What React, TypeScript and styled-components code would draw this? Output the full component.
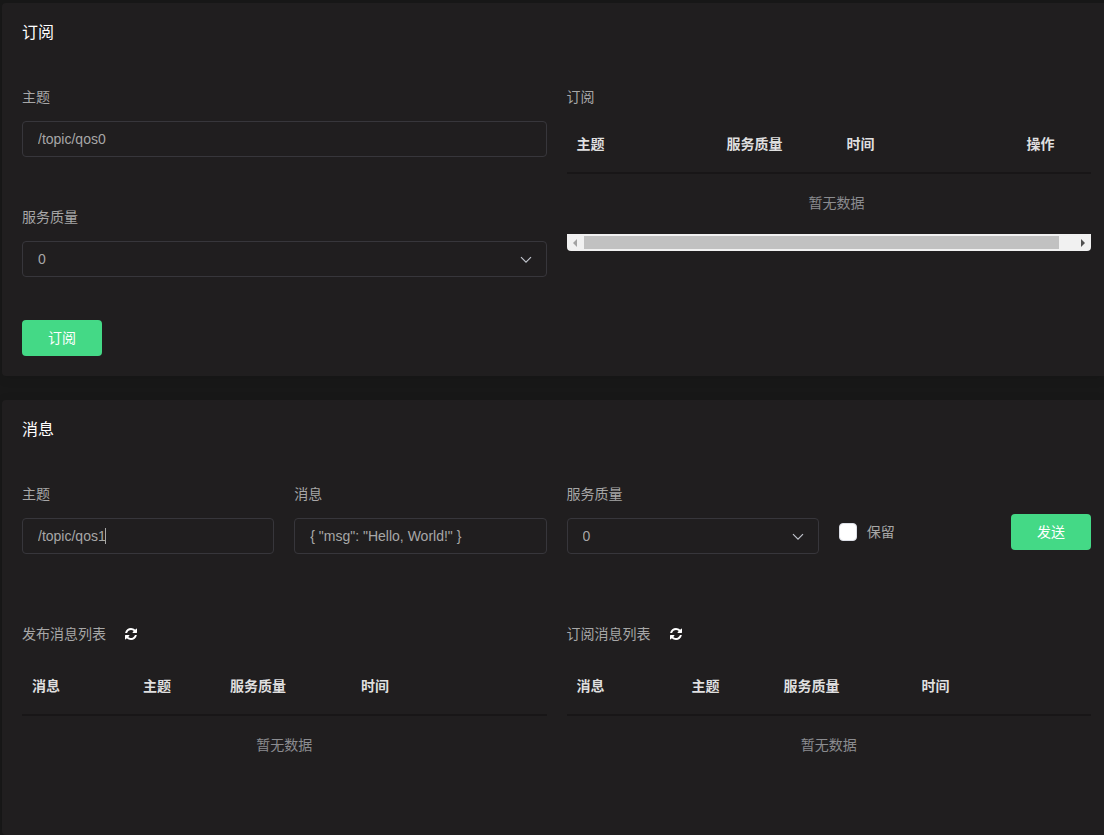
import React from "react";
import styled, { createGlobalStyle } from "styled-components";

const GlobalStyle = createGlobalStyle`
  *, *::before, *::after { box-sizing: border-box; }
  body {
    margin: 0;
    background: #181818;
    color: #a7a7a7;
    font: 14px/20px "Liberation Sans", "Noto Sans CJK SC", sans-serif;
  }
  button, input, select { font: inherit; }
`;

const Page = styled.main`
  display: flex;
  flex-direction: column;
  gap: 24px;
  min-height: 100vh;
  padding: 3px 0 0 2px;
`;

const Card = styled.section<{ $grow?: boolean }>`
  flex: ${(p) => (p.$grow ? "1 0 auto" : "none")};
  padding: 20px 13px 20px 20px;
  background: #201e1f;
  border-radius: 4px 0 0 4px;
  box-shadow: 0 2px 12px rgba(0, 0, 0, 0.1);
`;

const CardTitle = styled.h2`
  margin: 0 0 44px;
  color: #fff;
  font-size: 16px;
  line-height: 20px;
  font-weight: 400;
`;

const Halves = styled.div`
  display: grid;
  grid-template-columns: repeat(2, minmax(0, 1fr));
  column-gap: 20px;
`;

const Quarters = styled.form`
  display: grid;
  grid-template-columns: repeat(4, minmax(0, 1fr));
  column-gap: 20px;
  margin-bottom: 70px;
`;

const SubscribeForm = styled.form`
  display: flex;
  flex-direction: column;
  align-items: stretch;
  gap: 50px;
`;

const Field = styled.div`
  display: flex;
  flex-direction: column;
  gap: 14px;
`;

const Control = styled.div`
  position: relative;
`;

const TextInput = styled.input`
  display: block;
  width: 100%;
  height: 36px;
  padding: 0 15px;
  border: 1px solid #37363b;
  border-radius: 4px;
  outline: none;
  background: transparent;
  color: #a7a7a7;
`;

const Caret = styled.span`
  position: absolute;
  top: 10px;
  left: 83px;
  width: 1px;
  height: 16px;
  background: #a7a7a7;
  pointer-events: none;
`;

const Select = styled.select`
  display: block;
  width: 100%;
  height: 36px;
  padding: 0 32px 0 15px;
  appearance: none;
  border: 1px solid #37363b;
  border-radius: 4px;
  outline: none;
  background: #201e1f;
  color: #a7a7a7;
`;

const Chevron = styled.svg`
  position: absolute;
  top: 15px;
  right: 15px;
  pointer-events: none;
`;

const Button = styled.button`
  width: 80px;
  height: 36px;
  padding: 0;
  border: 0;
  border-radius: 4px;
  background: #44d986;
  color: #fff;
  cursor: pointer;
`;

const SubmitRow = styled.div`
  display: flex;
  margin-top: -7px;
`;

const SendRow = styled.div`
  display: flex;
  align-items: center;
  justify-content: space-between;
  height: 36px;
  margin-top: 30px;
`;

const CheckLabel = styled.label`
  display: flex;
  align-items: center;
  gap: 10px;
`;

const Checkbox = styled.input`
  width: 18px;
  height: 18px;
  margin: 0;
  appearance: none;
  border: 1px solid #dcdfe6;
  border-radius: 4px;
  background: #fff;
`;

const ListTitle = styled.div<{ $spaced?: boolean }>`
  display: flex;
  align-items: center;
  gap: 19px;
  margin-bottom: ${(p) => (p.$spaced ? "13px" : "8px")};
`;

const IconButton = styled.button`
  display: flex;
  padding: 0;
  border: 0;
  background: none;
  color: #fff;
  cursor: pointer;
`;

const TableScroll = styled.div`
  overflow: hidden;
`;

const Table = styled.table<{ $minWidth?: number }>`
  width: 100%;
  min-width: ${(p) => (p.$minWidth ? `${p.$minWidth}px` : "0")};
  table-layout: fixed;
  border-collapse: collapse;
`;

const HeadCell = styled.th<{ $width?: number }>`
  width: ${(p) => (p.$width ? `${p.$width}px` : "auto")};
  height: 58px;
  padding: 0 10px;
  border-bottom: 2px solid #181617;
  color: #dfdfdf;
  font-weight: 700;
  text-align: left;
`;

const EmptyCell = styled.td`
  height: 61px;
  padding: 0 0 3px;
  color: #8b8c90;
  text-align: center;
`;

const ScrollBar = styled.div`
  display: flex;
  align-items: center;
  height: 17px;
  background: #f1f1f1;
  border-radius: 0 0 4px 4px;
`;

const ScrollArrow = styled.svg`
  flex: none;
`;

const ScrollTrack = styled.div`
  flex: 1;
`;

const ScrollThumb = styled.div`
  width: 97%;
  height: 13px;
  background: #c1c1c1;
`;

type Column = { label: string; width?: number };

const subscriptionColumns: Column[] = [
  { label: "主题", width: 150 },
  { label: "服务质量", width: 120 },
  { label: "时间", width: 180 },
  { label: "操作" },
];

const publishedColumns: Column[] = [
  { label: "消息", width: 111 },
  { label: "主题", width: 87 },
  { label: "服务质量", width: 131 },
  { label: "时间" },
];

const receivedColumns: Column[] = [
  { label: "消息", width: 115 },
  { label: "主题", width: 92 },
  { label: "服务质量", width: 138 },
  { label: "时间" },
];

function DataTable({ columns, minWidth }: { columns: Column[]; minWidth?: number }) {
  return (
    <Table $minWidth={minWidth}>
      <thead>
        <tr>
          {columns.map((c) => (
            <HeadCell key={c.label} $width={c.width} scope="col">
              {c.label}
            </HeadCell>
          ))}
        </tr>
      </thead>
      <tbody>
        <tr>
          <EmptyCell colSpan={columns.length}>暂无数据</EmptyCell>
        </tr>
      </tbody>
    </Table>
  );
}

function QosField({ id }: { id: string }) {
  return (
    <Field>
      <label htmlFor={id}>服务质量</label>
      <Control>
        <Select id={id} defaultValue="0">
          <option>0</option>
          <option>1</option>
          <option>2</option>
        </Select>
        <Chevron width="12" height="8" viewBox="0 0 12 8" fill="none" stroke="#c0c4cc" strokeWidth="1.2">
          <path d="M1 1.2l5 5 5-5" />
        </Chevron>
      </Control>
    </Field>
  );
}

function TextField({ id, label, value, caret }: { id: string; label: string; value: string; caret?: boolean }) {
  return (
    <Field>
      <label htmlFor={id}>{label}</label>
      <Control>
        <TextInput id={id} type="text" defaultValue={value} />
        {caret && <Caret />}
      </Control>
    </Field>
  );
}

function RefreshButton() {
  return (
    <IconButton type="button" aria-label="刷新">
      <svg width="12" height="12" viewBox="0 0 1536 1536" fill="currentColor">
        <path d="M1511 928q0 5-1 7-64 268-268 434.5t-478 166.5q-146 0-282.5-55t-243.5-157l-129 129q-19 19-45 19t-45-19-19-45v-448q0-26 19-45t45-19h448q26 0 45 19t19 45-19 45l-137 137q71 66 161 102t187 36q134 0 250-65t186-179q11-17 53-117 8-23 30-23h192q13 0 22.5 9.5t9.5 22.5zm25-800v448q0 26-19 45t-45 19h-448q-26 0-45-19t-19-45 19-45l138-138q-148-137-349-137-134 0-250 65t-186 179q-11 17-53 117-8 23-30 23h-199q-13 0-22.5-9.5t-9.5-22.5v-7q65-268 270-434.5t480-166.5q146 0 284 55.5t245 156.5l130-129q19-19 45-19t45 19 19 45z" />
      </svg>
    </IconButton>
  );
}

export default function App() {
  return (
    <>
      <GlobalStyle />
      <Page>
        <Card>
          <CardTitle>订阅</CardTitle>
          <Halves>
            <SubscribeForm onSubmit={(e) => e.preventDefault()}>
              <TextField id="sub-topic" label="主题" value="/topic/qos0" />
              <QosField id="sub-qos" />
              <SubmitRow>
                <Button type="submit">订阅</Button>
              </SubmitRow>
            </SubscribeForm>
            <div>
              <ListTitle>订阅</ListTitle>
              <TableScroll>
                <DataTable columns={subscriptionColumns} minWidth={540} />
              </TableScroll>
              <ScrollBar>
                <ScrollArrow width="17" height="17" viewBox="0 0 17 17" fill="#a3a3a3">
                  <path d="M10 5v8L6 9z" />
                </ScrollArrow>
                <ScrollTrack>
                  <ScrollThumb />
                </ScrollTrack>
                <ScrollArrow width="17" height="17" viewBox="0 0 17 17" fill="#505050">
                  <path d="M7 5v8l4-4z" />
                </ScrollArrow>
              </ScrollBar>
            </div>
          </Halves>
        </Card>

        <Card $grow>
          <CardTitle>消息</CardTitle>
          <Quarters onSubmit={(e) => e.preventDefault()}>
            <TextField id="pub-topic" label="主题" value="/topic/qos1" caret />
            <TextField id="pub-message" label="消息" value={'{ "msg": "Hello, World!" }'} />
            <QosField id="pub-qos" />
            <SendRow>
              <CheckLabel>
                <Checkbox type="checkbox" />
                保留
              </CheckLabel>
              <Button type="submit">发送</Button>
            </SendRow>
          </Quarters>
          <Halves>
            <div>
              <ListTitle $spaced>
                发布消息列表
                <RefreshButton />
              </ListTitle>
              <DataTable columns={publishedColumns} />
            </div>
            <div>
              <ListTitle $spaced>
                订阅消息列表
                <RefreshButton />
              </ListTitle>
              <DataTable columns={receivedColumns} />
            </div>
          </Halves>
        </Card>
      </Page>
    </>
  );
}
